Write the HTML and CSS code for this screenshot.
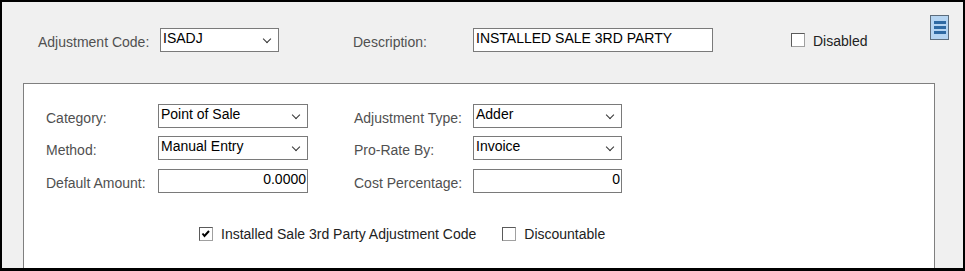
FILE: index.html
```html
<!DOCTYPE html>
<html>
<head>
<meta charset="utf-8">
<link rel="stylesheet" href="styles.css">
</head>
<body>
<div class="frame">
  <div class="top">
    <div class="fields">
      <span class="lbl w-code">Adjustment Code:</span>
      <div class="box sel w-codebox"><span class="val">ISADJ</span><span class="chev"></span></div>
      <span class="lbl w-desc">Description:</span>
      <div class="box w-descbox"><span class="val">INSTALLED SALE 3RD PARTY</span></div>
      <label class="chk disabled-chk"><span class="cb"></span><span class="cbtext">Disabled</span></label>
    </div>
    <div class="menu-btn"><span></span><span></span><span></span></div>
  </div>
  <div class="panel">
    <div class="line">
      <span class="lbl c1">Category:</span>
      <div class="box sel c2"><span class="val">Point of Sale</span><span class="chev"></span></div>
      <span class="lbl c3">Adjustment Type:</span>
      <div class="box sel c4"><span class="val">Adder</span><span class="chev"></span></div>
    </div>
    <div class="line">
      <span class="lbl c1">Method:</span>
      <div class="box sel c2"><span class="val">Manual Entry</span><span class="chev"></span></div>
      <span class="lbl c3">Pro-Rate By:</span>
      <div class="box sel c4"><span class="val">Invoice</span><span class="chev"></span></div>
    </div>
    <div class="line">
      <span class="lbl c1">Default Amount:</span>
      <div class="box num c2"><span class="val">0.0000</span></div>
      <span class="lbl c3">Cost Percentage:</span>
      <div class="box num c4"><span class="val">0</span></div>
    </div>
    <div class="checks">
      <label class="chk"><span class="cb"><svg width="12" height="12" viewBox="0 0 12 12"><polyline points="2.5,5.5 4.5,8 9,3" fill="none" stroke="#000" stroke-width="2"/></svg></span><span class="cbtext">Installed Sale 3rd Party Adjustment Code</span></label>
      <label class="chk second"><span class="cb"></span><span class="cbtext">Discountable</span></label>
    </div>
  </div>
</div>
</body>
</html>
```

FILE: styles.css
```css
html, body {
  margin: 0;
  padding: 0;
  background: #fff;
}

.frame {
  width: 965px;
  height: 271px;
  box-sizing: border-box;
  border: 2px solid #000;
  border-bottom-width: 3px;
  background: #f0f0f0;
  overflow: hidden;
  font-family: "Liberation Sans", Arial, sans-serif;
  font-size: 14px;
}

.top {
  height: 81px;
  box-sizing: border-box;
  display: flex;
  align-items: flex-start;
  padding: 11px 14px 0 36px;
}

.fields {
  display: flex;
  align-items: center;
  height: 24px;
  margin-top: 15px;
}

.lbl {
  color: #505050;
  padding-top: 3px;
  white-space: nowrap;
}

.w-code { width: 122px; }
.w-codebox { width: 119px; }
.w-desc { width: 120px; margin-left: 74px; }
.w-descbox { width: 240px; }

.box {
  position: relative;
  height: 24px;
  box-sizing: border-box;
  border: 1px solid #7a7a7a;
  background: #fff;
  color: #000;
  line-height: 16px;
  padding: 1px 2px 0;
  white-space: nowrap;
}

.num {
  text-align: right;
  padding-right: 1px;
}

.chev {
  position: absolute;
  right: 8px;
  top: 7px;
  width: 5px;
  height: 5px;
  border-right: 1px solid #333;
  border-bottom: 1px solid #333;
  transform: rotate(45deg);
}

.chk {
  display: flex;
  align-items: center;
  color: #222;
}

.disabled-chk {
  margin-left: 78px;
  color: #222;
}

.cb {
  width: 14px;
  height: 14px;
  box-sizing: border-box;
  border: 1px solid #5a5a5a;
  border-right-color: #a0a0a0;
  border-bottom-color: #a0a0a0;
  background: #fff;
  display: flex;
  align-items: center;
  justify-content: center;
  margin-right: 8px;
}

.cb svg { display: block; }

.cbtext {
  padding-top: 1px;
}

.menu-btn {
  margin-left: auto;
  margin-top: 2px;
  width: 19px;
  height: 25px;
  box-sizing: border-box;
  border: 1px solid #5c6d7d;
  background: #b6d5f2;
  display: flex;
  flex-direction: column;
  align-items: center;
  justify-content: center;
  gap: 2px;
}

.menu-btn span {
  width: 12px;
  height: 3px;
  background: #2f6aa3;
}

.panel {
  margin-left: 21px;
  width: 912px;
  height: 200px;
  box-sizing: border-box;
  border: 1px solid #7f7f7f;
  border-bottom: none;
  background: #fff;
  padding: 20px 0 0 22px;
}

.line {
  display: flex;
  align-items: center;
  height: 24px;
  margin-bottom: 8px;
}

.line:nth-child(2) { margin-bottom: 9px; }

.c1 { width: 112px; }
.c2 { width: 150px; }
.c3 { width: 119px; margin-left: 46px; }
.c4 { width: 149px; }

.checks {
  display: flex;
  align-items: center;
  margin-top: 32px;
  padding-left: 153px;
}

.checks .second {
  margin-left: 26px;
}
```
